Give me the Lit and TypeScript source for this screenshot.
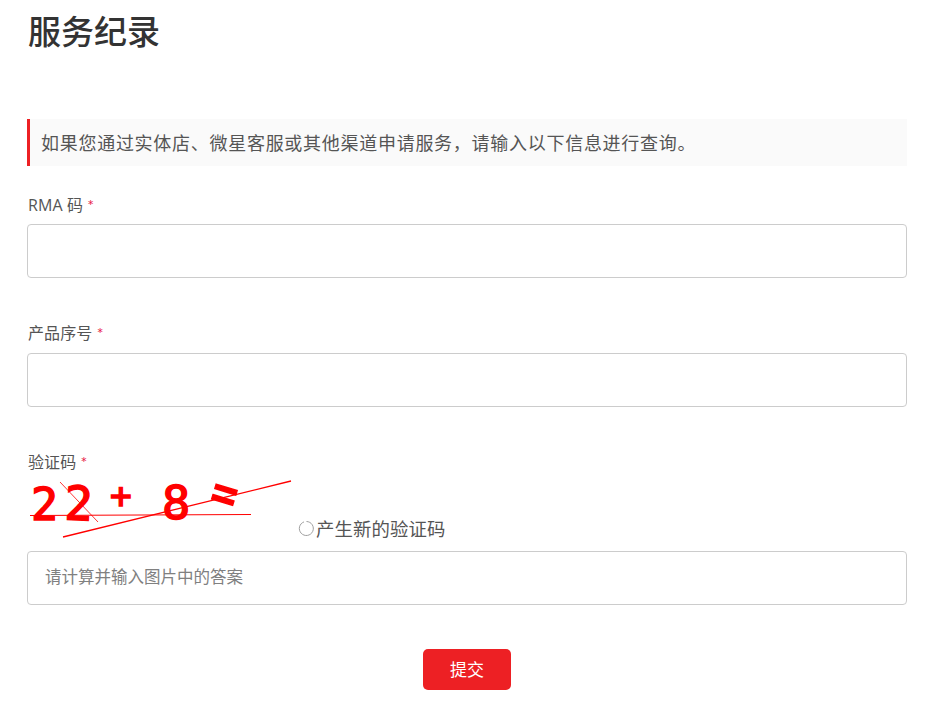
import { LitElement, html, css } from "lit";
import { customElement } from "lit/decorators.js";

const NOTICE = "如果您通过实体店、微星客服或其他渠道申请服务\uFF0C请输入以下信息进行查询。";

@customElement("app-root")
export class AppRoot extends LitElement {
  static override styles = css`
    :host {
      display: block;
      font-family: "Open Sans", "Noto Sans CJK SC", sans-serif;
      color: #333;
      background: #fff;
      height: 707px;
      overflow: hidden;
    }

    .page {
      width: 880px;
      padding: 0 0 0 27px;
    }

    h1 {
      margin: 0;
      padding-top: 8px;
      padding-left: 1px;
      height: 119px;
      box-sizing: border-box;
      font-size: 33px;
      line-height: 48px;
      font-weight: 500;
      color: #333;
    }

    .notice {
      display: flex;
      align-items: center;
      height: 47px;
      box-sizing: border-box;
      padding: 0 0 2px 11px;
      background: #fafafa;
      border-left: 3px solid #ed2024;
      font-size: 18px;
      letter-spacing: 0.72px;
      color: #555;
    }

    .field {
      display: flex;
      flex-direction: column;
    }

    .field label {
      height: 26px;
      padding-left: 1px;
      font-size: 16px;
      line-height: 26px;
      letter-spacing: 0.1px;
      color: #555;
    }

    .req {
      font-family: "Lato", sans-serif;
      color: #e8234a;
    }

    input {
      display: block;
      box-sizing: border-box;
      width: 100%;
      height: 54px;
      padding: 0 17px 3px;
      border: 1px solid #ccc;
      border-radius: 4px;
      background: #fff;
      font: inherit;
      font-size: 16.5px;
      outline: none;
    }

    input::placeholder {
      color: #808080;
      opacity: 1;
    }

    .rma {
      margin-top: 26px;
    }
    .rma label {
      margin-bottom: 6px;
    }
    .serial {
      margin-top: 42px;
    }
    .serial label {
      margin-bottom: 7px;
    }
    .code {
      margin-top: 42px;
    }

    .captcha {
      display: flex;
      align-items: flex-end;
      height: 76px;
      padding-bottom: 9px;
      box-sizing: border-box;
    }

    .captcha-img {
      display: block;
      width: 271px;
      height: 62px;
      flex: none;
      overflow: visible;
    }

    .captcha-img text {
      font-family: "DejaVu Sans Mono", monospace;
      fill: #ff0000;
      stroke: #ff0000;
      stroke-width: 1.5px;
    }

    .refresh {
      display: flex;
      align-items: center;
      height: 24px;
      padding-bottom: 2px;
      font-size: 18.4px;
      letter-spacing: 0.1px;
      color: #555;
    }

    .refresh svg {
      width: 17px;
      height: 17px;
      margin-right: 1px;
    }

    .actions {
      display: flex;
      justify-content: center;
      margin-top: 44px;
    }

    button {
      width: 88px;
      height: 41px;
      border: none;
      border-radius: 5px;
      background: #ed2024;
      color: #fff;
      font: inherit;
      font-size: 17px;
      padding: 0 0 2px;
    }
  `;

  override render() {
    return html`
      <div class="page">
        <h1>服务纪录</h1>
        <div class="notice">${NOTICE}</div>

        <div class="field rma">
          <label>RMA 码 <span class="req">*</span></label>
          <input type="text" />
        </div>

        <div class="field serial">
          <label>产品序号 <span class="req">*</span></label>
          <input type="text" />
        </div>

        <div class="field code">
          <label>验证码 <span class="req">*</span></label>
          <div class="captcha">
            <svg class="captcha-img" viewBox="0 0 271 62">
              <text x="4" y="40" font-size="45">2</text>
              <text x="37" y="40" font-size="47" transform="rotate(2 50 40)">2</text>
              <text x="83" y="28" font-size="36">+</text>
              <text x="135" y="39" font-size="47">8</text>
              <text transform="translate(197 16) rotate(17) scale(0.78 1)" y="16" text-anchor="middle" font-size="55">=</text>
              <g stroke="#ff0000" fill="none">
                <line x1="3" y1="35.5" x2="224" y2="34.5" stroke-width="1.2" />
                <line x1="36" y1="57" x2="264" y2="1" stroke-width="1.3" />
                <line x1="33" y1="2" x2="71" y2="42" stroke-width="0.8" />
              </g>
            </svg>
            <span class="refresh">
              <svg viewBox="0 0 17 17" fill="none">
                <path d="M6 1.9 A7 7 0 1 0 8.5 1.5" stroke="#a0a0a0" stroke-width="1" />
              </svg>
              产生新的验证码
            </span>
          </div>
          <input type="text" placeholder="请计算并输入图片中的答案" />
        </div>

        <div class="actions">
          <button type="button">提交</button>
        </div>
      </div>
    `;
  }
}

declare global {
  interface HTMLElementTagNameMap {
    "app-root": AppRoot;
  }
}
